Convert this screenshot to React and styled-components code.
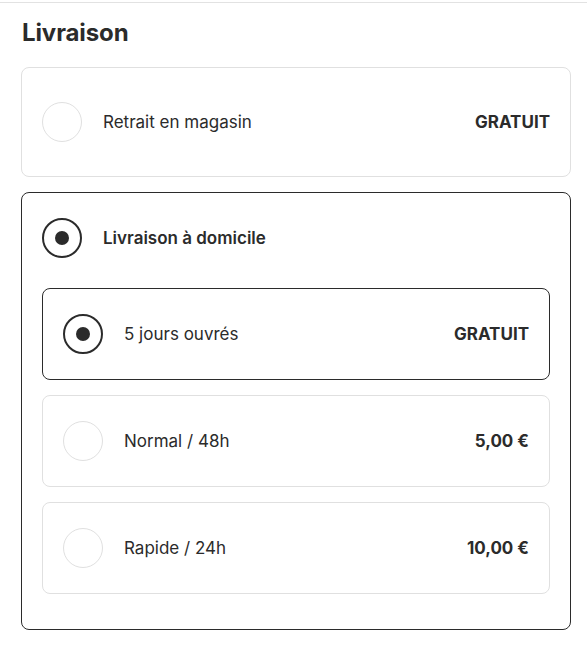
import React, { useState } from 'react';
import styled, { createGlobalStyle } from 'styled-components';

const GlobalStyle = createGlobalStyle`
  body {
    margin: 0;
    background: #fff;
    font-family: Inter, "Liberation Sans", sans-serif;
    color: #2b2b2b;
  }
`;

const Section = styled.section`
  margin-top: 2px;
  border-top: 1px solid #e2e2e2;
  padding: 0 16px 30px 21px;
`;

const Title = styled.h2`
  margin: 14px 0 18px 1px;
  font-size: 24px;
  font-weight: 700;
  line-height: 32px;
  letter-spacing: -0.1px;
`;

const Options = styled.div`
  display: flex;
  flex-direction: column;
  gap: 15px;
`;

const Card = styled.div`
  border: 1px solid ${(p) => (p.$active ? '#2b2b2b' : '#e0e0e0')};
  border-radius: 8px;
  padding: ${(p) => (p.$expanded ? '25px 20px 35px' : '34px 20px')};
  background: #fff;
`;

const SubCard = styled(Card)`
  padding: 25px 20px;
`;

const Row = styled.label`
  display: flex;
  align-items: center;
  gap: 21px;
  cursor: pointer;
`;

const Radio = styled.span`
  flex: 0 0 auto;
  width: 40px;
  height: 40px;
  box-sizing: border-box;
  border-radius: 50%;
  border: ${(p) => (p.$checked ? '2px solid #2b2b2b' : '1px solid #e0e0e0')};
  display: flex;
  align-items: center;
  justify-content: center;

  &::after {
    content: '';
    display: ${(p) => (p.$checked ? 'block' : 'none')};
    width: 14px;
    height: 14px;
    border-radius: 50%;
    background: #2b2b2b;
  }
`;

const Label = styled.span`
  flex: 1;
  font-size: 17px;
  font-weight: ${(p) => (p.$bold ? 600 : 400)};
`;

const Price = styled.span`
  font-size: 17px;
  font-weight: 700;
`;

const SubList = styled.div`
  display: flex;
  flex-direction: column;
  gap: 15px;
  margin-top: 30px;
`;

const speeds = [
  { id: '5j', label: '5 jours ouvrés', price: 'GRATUIT' },
  { id: '48h', label: 'Normal / 48h', price: '5,00 €' },
  { id: '24h', label: 'Rapide / 24h', price: '10,00 €' },
];

export default function App() {
  const [mode, setMode] = useState('home');
  const [speed, setSpeed] = useState('5j');

  return (
    <>
      <GlobalStyle />
      <Section>
        <Title>Livraison</Title>
        <Options>
          <Card $active={mode === 'store'} onClick={() => setMode('store')}>
            <Row>
              <Radio $checked={mode === 'store'} />
              <Label>Retrait en magasin</Label>
              <Price>GRATUIT</Price>
            </Row>
          </Card>

          <Card $active={mode === 'home'} $expanded={mode === 'home'}>
            <Row onClick={() => setMode('home')}>
              <Radio $checked={mode === 'home'} />
              <Label $bold>Livraison à domicile</Label>
            </Row>
            {mode === 'home' && (
              <SubList>
                {speeds.map((s) => (
                  <SubCard key={s.id} $active={speed === s.id} onClick={() => setSpeed(s.id)}>
                    <Row>
                      <Radio $checked={speed === s.id} />
                      <Label>{s.label}</Label>
                      <Price>{s.price}</Price>
                    </Row>
                  </SubCard>
                ))}
              </SubList>
            )}
          </Card>
        </Options>
      </Section>
    </>
  );
}
